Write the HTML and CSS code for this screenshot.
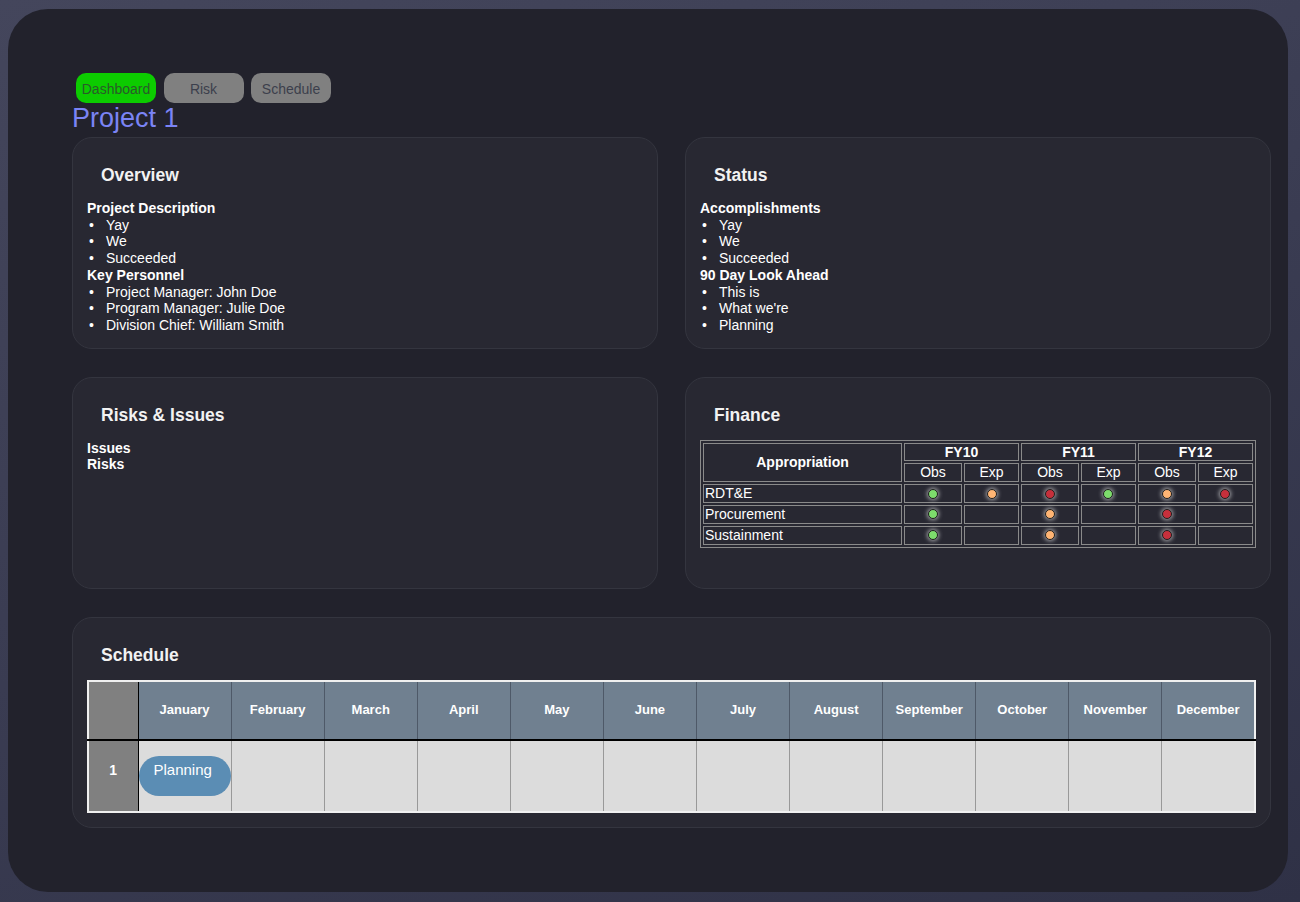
FILE: index.html
```html
<!DOCTYPE html>
<html>
<head>
<meta charset="utf-8">
<link rel="stylesheet" href="styles.css">
</head>
<body>
<div class="panel">
  <div class="tabs">
    <button class="tab tab-active">Dashboard</button>
    <button class="tab">Risk</button>
    <button class="tab">Schedule</button>
  </div>
  <h1 class="project-title">Project 1</h1>
  <div class="grid">
    <section class="card">
      <h3 class="card-title">Overview</h3>
      <div class="label">Project Description</div>
      <ul class="list">
        <li>Yay</li>
        <li>We</li>
        <li>Succeeded</li>
      </ul>
      <div class="label">Key Personnel</div>
      <ul class="list">
        <li>Project Manager: John Doe</li>
        <li>Program Manager: Julie Doe</li>
        <li>Division Chief: William Smith</li>
      </ul>
    </section>
    <section class="card">
      <h3 class="card-title">Status</h3>
      <div class="label">Accomplishments</div>
      <ul class="list">
        <li>Yay</li>
        <li>We</li>
        <li>Succeeded</li>
      </ul>
      <div class="label">90 Day Look Ahead</div>
      <ul class="list">
        <li>This is</li>
        <li>What we're</li>
        <li>Planning</li>
      </ul>
    </section>
    <section class="card card-tall">
      <h3 class="card-title">Risks &amp; Issues</h3>
      <div class="label">Issues</div>
      <div class="label">Risks</div>
    </section>
    <section class="card card-tall">
      <h3 class="card-title">Finance</h3>
      <table class="fin">
        <tr>
          <th rowspan="2" class="fin-app">Appropriation</th>
          <th colspan="2">FY10</th>
          <th colspan="2">FY11</th>
          <th colspan="2">FY12</th>
        </tr>
        <tr>
          <td class="c">Obs</td><td class="c">Exp</td>
          <td class="c">Obs</td><td class="c">Exp</td>
          <td class="c">Obs</td><td class="c">Exp</td>
        </tr>
        <tr>
          <td>RDT&amp;E</td>
          <td class="c"><span class="dot green"></span></td>
          <td class="c"><span class="dot orange"></span></td>
          <td class="c"><span class="dot red"></span></td>
          <td class="c"><span class="dot green"></span></td>
          <td class="c"><span class="dot orange"></span></td>
          <td class="c"><span class="dot red"></span></td>
        </tr>
        <tr>
          <td>Procurement</td>
          <td class="c"><span class="dot green"></span></td>
          <td></td>
          <td class="c"><span class="dot orange"></span></td>
          <td></td>
          <td class="c"><span class="dot red"></span></td>
          <td></td>
        </tr>
        <tr>
          <td>Sustainment</td>
          <td class="c"><span class="dot green"></span></td>
          <td></td>
          <td class="c"><span class="dot orange"></span></td>
          <td></td>
          <td class="c"><span class="dot red"></span></td>
          <td></td>
        </tr>
      </table>
    </section>
    <section class="card card-wide">
      <h3 class="card-title">Schedule</h3>
      <table class="sched">
        <colgroup>
          <col class="col-num">
          <col><col><col><col><col><col><col><col><col><col><col><col>
        </colgroup>
        <thead>
          <tr>
            <th class="corner"></th>
            <th>January</th><th>February</th><th>March</th><th>April</th>
            <th>May</th><th>June</th><th>July</th><th>August</th>
            <th>September</th><th>October</th><th>November</th><th>December</th>
          </tr>
        </thead>
        <tbody>
          <tr>
            <td class="rownum">1</td>
            <td class="pill-cell"><div class="pill">Planning</div></td>
            <td></td><td></td><td></td><td></td><td></td><td></td>
            <td></td><td></td><td></td><td></td><td></td>
          </tr>
        </tbody>
      </table>
    </section>
  </div>
</div>
</body>
</html>
```

FILE: styles.css
```css
html, body {
  margin: 0;
  padding: 0;
}
body {
  width: 1300px;
  height: 902px;
  background: linear-gradient(160deg, #44465c 0%, #3a3c52 50%, #2f3146 100%);
  font-family: "Liberation Sans", Arial, sans-serif;
  color: #ffffff;
  overflow: hidden;
}
.panel {
  box-sizing: border-box;
  margin: 9px 0 0 8px;
  width: 1280px;
  height: 883px;
  background: #22222c;
  border-radius: 40px;
  padding: 64px 17px 0 64px;
}
.tabs {
  display: flex;
  gap: 7.5px;
  margin-left: 4px;
}
.tab {
  width: 80px;
  height: 30px;
  border: none;
  border-radius: 10px;
  background: #808080;
  color: #3c3f4c;
  font-family: "Liberation Sans", Arial, sans-serif;
  font-size: 14px;
  padding: 2px 0 0 0;
  line-height: 28px;
}
.tab-active {
  background: #0ccc00;
  color: #2a5a2a;
}
.project-title {
  margin: 0;
  font-weight: normal;
  font-size: 27px;
  line-height: 30px;
  color: #7b84f5;
  height: 34px;
}
.grid {
  display: grid;
  grid-template-columns: 586px 586px;
  column-gap: 27px;
  row-gap: 28px;
}
.card {
  box-sizing: border-box;
  min-height: 211px;
  background: #282832;
  border: 1px solid #34353f;
  border-radius: 20px;
  padding: 27px 14px 14px 14px;
  font-size: 14px;
  line-height: 16.7px;
}
.card-tall {
  min-height: 212px;
}
.card-wide {
  grid-column: 1 / span 2;
}
.card-title {
  margin: 0 0 15px 14px;
  font-size: 17.5px;
  line-height: 20px;
  font-weight: bold;
  color: #f2f2f2;
}
.label {
  font-weight: bold;
}
.list {
  margin: 0;
  padding: 0;
  list-style: none;
}
.list li::before {
  content: "\2022";
  display: inline-block;
  width: 17px;
  padding-left: 2px;
}

/* Finance table */
.fin {
  width: 100%;
  border: 1px solid #8a8a8a;
  border-spacing: 2px;
  margin-top: 1px;
  font-size: 14px;
}
.fin th, .fin td {
  border: 1px solid #8a8a8a;
  padding: 0 1px;
  line-height: 16.8px;
  height: 16.8px;
}
.fin th {
  font-weight: bold;
}
.fin-app {
  width: 195px;
}
.fin .c {
  text-align: center;
}
.dot {
  display: inline-block;
  box-sizing: border-box;
  width: 10px;
  height: 10px;
  border-radius: 50%;
  border: 1px solid #1e1e1e;
  box-shadow: 0 0 4px 1px rgba(255, 255, 255, 0.6);
  vertical-align: middle;
  position: relative;
  top: -1px;
}
.green { background: #7ddc6c; }
.orange { background: #ffb574; }
.red { background: #c6303c; }

/* Schedule table */
.sched {
  width: 100%;
  table-layout: fixed;
  border-collapse: collapse;
  border: 2px solid #f0f0f0;
  margin-top: 1px;
}
.col-num {
  width: 50px;
}
.sched th {
  background: #708090;
  color: #ffffff;
  font-size: 13px;
  font-weight: bold;
  height: 57px;
  padding: 0;
  border-right: 1px solid #4e5968;
  border-bottom: 2px solid #000000;
  text-align: center;
}
.sched th.corner {
  background: #808080;
  border-right: 1px solid #000000;
}
.sched td {
  background: #dcdcdc;
  height: 70px;
  padding: 0;
  border-right: 1px solid #999999;
  border-bottom: 1px solid #000000;
}
.sched td.rownum {
  background: #808080;
  color: #ffffff;
  font-weight: bold;
  font-size: 14px;
  text-align: center;
  border-right: 1px solid #000000;
  padding-bottom: 10px;
  box-sizing: border-box;
}
.pill {
  box-sizing: border-box;
  height: 40px;
  background: #5b8db4;
  border-radius: 20px;
  color: #ffffff;
  font-size: 15px;
  line-height: 18px;
  padding: 5px 0 0 15px;
}
```
